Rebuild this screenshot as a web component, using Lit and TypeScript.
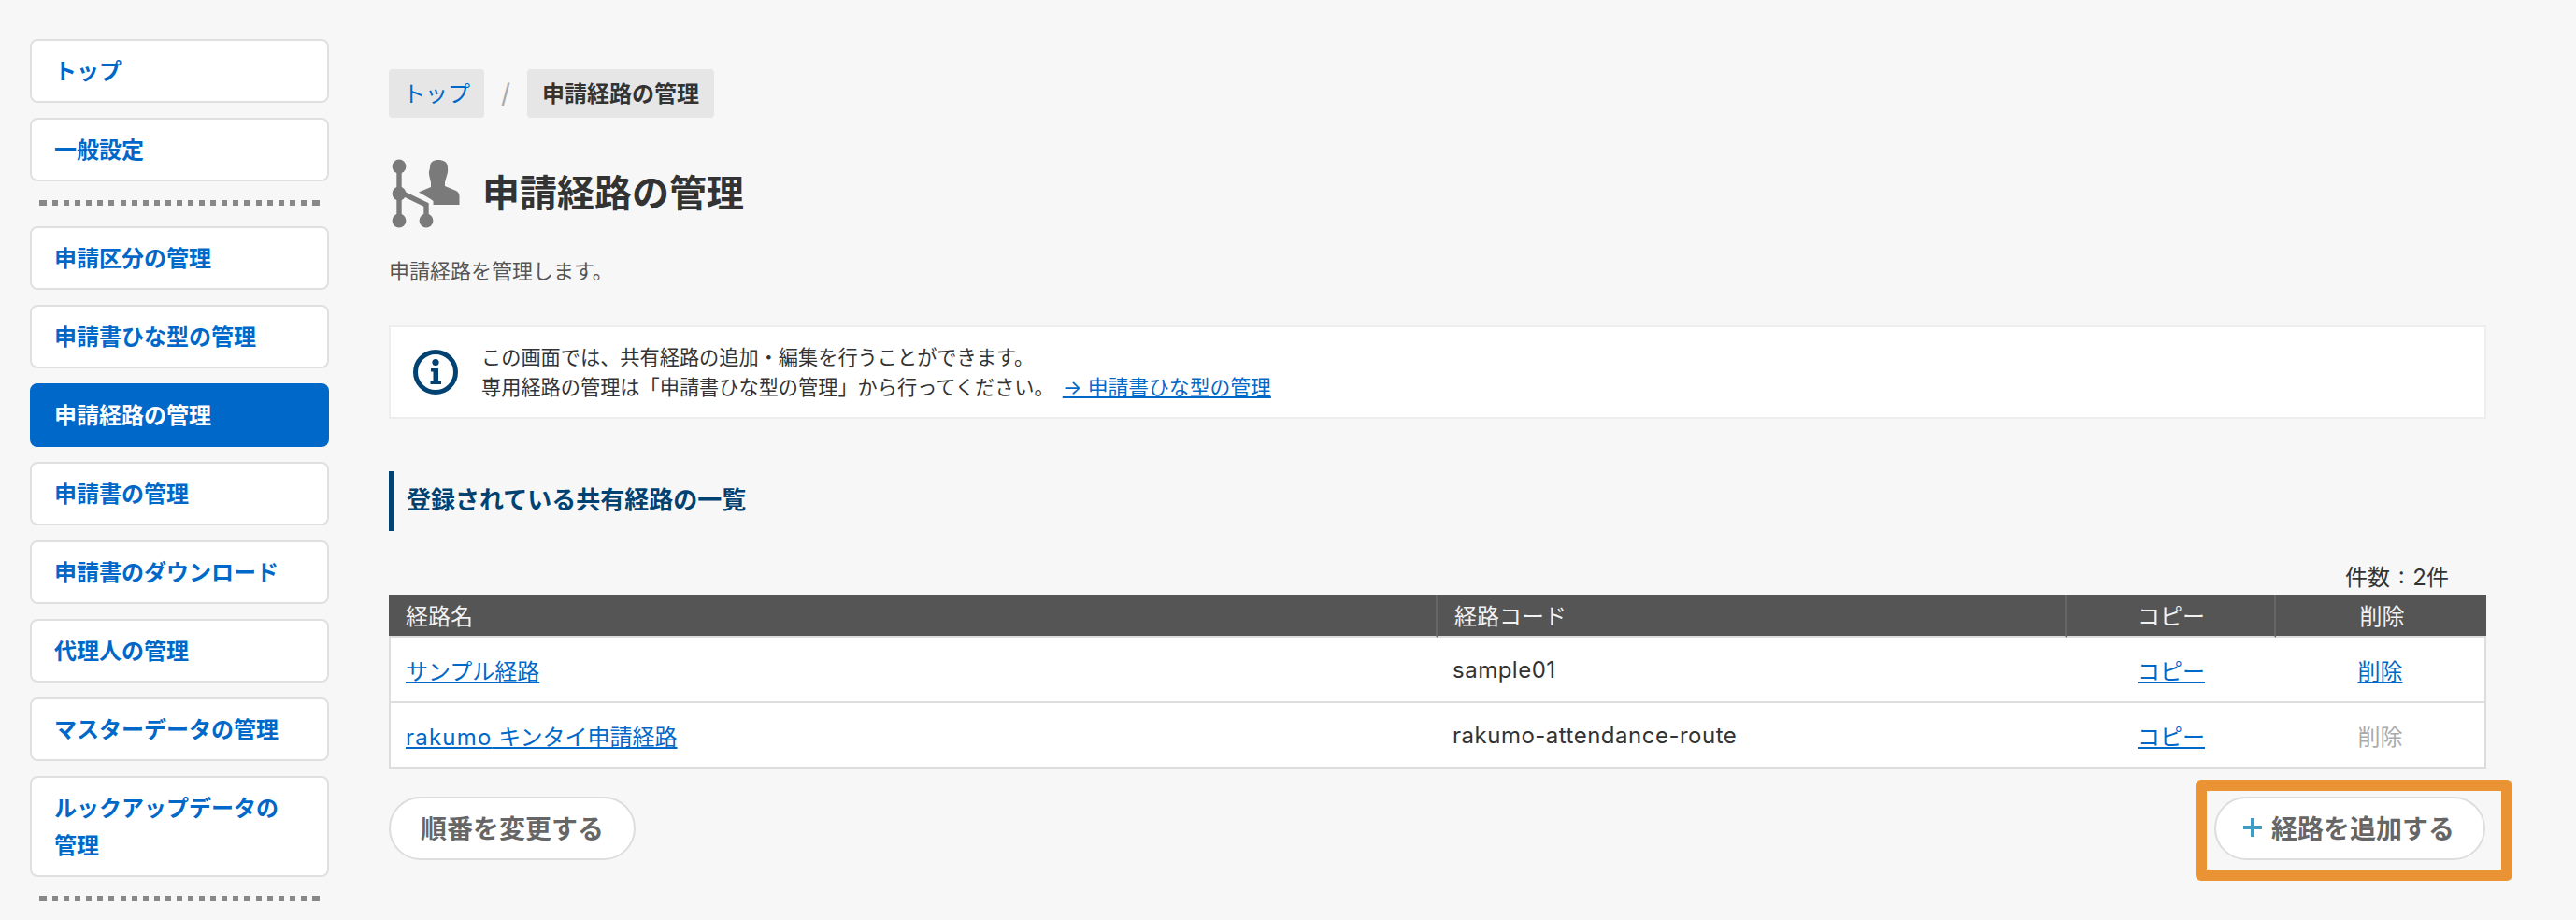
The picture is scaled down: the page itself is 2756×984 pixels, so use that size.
import { LitElement, html, css } from "lit";
import { customElement } from "lit/decorators.js";

const navA = ["トップ", "一般設定"];
const navB = ["申請区分の管理", "申請書ひな型の管理", "申請経路の管理", "申請書の管理", "申請書のダウンロード", "代理人の管理", "マスターデータの管理"];

@customElement("app-root")
export class AppRoot extends LitElement {
  static styles = css`
    :host {
      display: block;
      width: 2756px;
      height: 984px;
      overflow: hidden;
      background: #f7f7f7;
      color: #333;
      font-family: "Inter", "Noto Sans CJK JP", sans-serif;
      font-size: 24px;
    }
    * { box-sizing: border-box; }
    a { color: #0068c8; }
    .page { display: flex; align-items: flex-start; padding: 42px 0 0 32px; gap: 64px; }
    .side { width: 320px; flex: none; display: flex; flex-direction: column; gap: 16px; }
    .nav {
      display: block;
      padding: 13px 24px 11px;
      line-height: 40px;
      font-weight: 700;
      text-decoration: none;
      background: #fff;
      border: 2px solid #e0e0e0;
      border-radius: 8px;
    }
    .nav.on { background: #0068c8; border-color: #0068c8; color: #fff; }
    .dash {
      height: 6px;
      margin: 4px 10px 6px;
      background:
        linear-gradient(#888, #888) left / 8px 100% no-repeat,
        linear-gradient(#888, #888) right / 8px 100% no-repeat,
        repeating-linear-gradient(90deg, transparent 0 1.91px, #888 1.91px 7.91px, transparent 7.91px 12.087px);
    }
    .main { width: 2244px; flex: none; padding-top: 32px; }
    .crumbs { display: flex; align-items: center; }
    .crumb {
      height: 52px;
      line-height: 52px;
      padding: 1px 15px 0;
      background: #e6e6e6;
      border-radius: 4px;
    }
    a.crumb { text-decoration: none; }
    .crumb.cur { font-weight: 700; color: #333; padding: 1px 16px 0; }
    .sep { width: 46px; text-align: center; color: #aaa; font-size: 28px; }
    .title { display: flex; align-items: center; gap: 22px; margin: 44px 0 0 2px; }
    .title svg { display: block; flex: none; }
    h1 { margin: 0; font-size: 40px; line-height: 74px; font-weight: 700; color: #333; }
    .lead { margin: 28px 0 0; font-size: 22px; line-height: 36px; color: #555; }
    .info {
      display: flex;
      align-items: center;
      gap: 25px;
      margin-top: 40px;
      padding: 16px 24px;
      height: 100px;
      background: #fff;
      border: 2px solid #eee;
      font-size: 21.2px;
      line-height: 32px;
    }
    .info svg { flex: none; display: block; }
    .info a { margin-left: 9px; font-size: 21.8px; }
    h2 {
      margin: 56px 0 0;
      height: 64px;
      padding-left: 13px;
      border-left: 6px solid #004272;
      font-size: 26px;
      line-height: 61px;
      font-weight: 700;
      color: #004272;
    }
    .count { margin-top: 32px; padding-right: 40px; text-align: right; line-height: 36px; font-size: 24px; word-spacing: 2px; }
    table { width: 2244px; border-collapse: separate; border-spacing: 0; table-layout: fixed; }
    th {
      height: 46px;
      padding: 0 16px 2px 18px;
      background: #555;
      color: #f2f2f2;
      font-weight: 400;
      text-align: left;
      border-right: 2px solid #666;
      border-bottom: 2px solid #ddd;
    }
    th:last-child { border-right: 0; }
    td {
      height: 70px;
      padding: 0 16px;
      background: #fff;
      border-bottom: 2px solid #ddd;
    }
    tr td:first-child { border-left: 2px solid #ddd; }
    tr td:last-child { border-right: 2px solid #ddd; }
    .c { text-align: center; }
    .off { color: #aaa; }
    .latin { letter-spacing: 0.5px; }
    .latin.wide { letter-spacing: 1.2px; }
    .actions { display: flex; justify-content: space-between; align-items: flex-start; margin: 30px 1px 0 0; }
    .pill {
      display: flex;
      align-items: center;
      height: 68px;
      padding: 0 32px 2px;
      background: #fff;
      border: 2px solid #ddd;
      border-radius: 34px;
      font-size: 28px;
      font-weight: 700;
      color: #666;
    }
    .pill.add { padding: 0 31px 2px 29px; }
    .plus { margin-right: 10px; display: block; }
    .mark { position: relative; }
    .mark::after {
      content: "";
      position: absolute;
      inset: -18px -29px -22px -20px;
      border: 12px solid #e99335;
      border-radius: 6px;
      pointer-events: none;
    }
  `;

  nav(label: string) {
    return html`<a class="nav ${label === "申請経路の管理" ? "on" : ""}" href="#">${label}</a>`;
  }

  render() {
    return html`
      <div class="page">
        <nav class="side">
          ${navA.map((l) => this.nav(l))}
          <div class="dash"></div>
          ${navB.map((l) => this.nav(l))}
          <a class="nav" href="#">ルックアップデータの<br />管理</a>
          <div class="dash"></div>
        </nav>
        <main class="main">
          <div class="crumbs">
            <a class="crumb" href="#">トップ</a>
            <span class="sep">/</span>
            <span class="crumb cur">申請経路の管理</span>
          </div>
          <div class="title">
            <svg width="76" height="74" viewBox="18 20 76 74" fill="#7a7a7a">
              <circle cx="27" cy="28" r="7.4" />
              <circle cx="27" cy="57" r="7.4" />
              <circle cx="27" cy="86" r="7.4" />
              <circle cx="56" cy="86" r="7.4" />
              <path d="M27 28V86M29 56L56 69V86" fill="none" stroke="#7a7a7a" stroke-width="5.4" />
              <path d="M60 29C60 23 64 21 69 21C74 21 79 23 79 29C79 31 79.500 33 78.500 36C77.500 40 76.500 43 76 45V49L88 54C90 55 91.500 57 91.500 60V69H63.500V65L60 62.500L48 55.500L61 50V45C60.500 43 59.500 40 59 36C58.500 33 60 31 60 29Z" />
            </svg>
            <h1>申請経路の管理</h1>
          </div>
          <p class="lead">申請経路を管理します。</p>
          <div class="info">
            <svg width="48" height="48" viewBox="0 0 48 48">
              <circle cx="24" cy="24" r="21.500" fill="none" stroke="#004272" stroke-width="5" />
              <circle cx="24" cy="13.500" r="3.600" fill="#004272" />
              <path d="M19 20H27V33.500H30V37H18.500V33.500H21.500V23.500H19Z" fill="#004272" />
            </svg>
            <div>
              この画面では、共有経路の追加・編集を行うことができます。<br />
              専用経路の管理は「申請書ひな型の管理」から行ってください。<a href="#">→ 申請書ひな型の管理</a>
            </div>
          </div>
          <h2>登録されている共有経路の一覧</h2>
          <div class="count">件数 : 2件</div>
          <table>
            <colgroup>
              <col style="width:1122px" />
              <col style="width:673px" />
              <col style="width:224px" />
              <col style="width:225px" />
            </colgroup>
            <thead>
              <tr>
                <th>経路名</th>
                <th>経路コード</th>
                <th class="c">コピー</th>
                <th class="c">削除</th>
              </tr>
            </thead>
            <tbody>
              <tr>
                <td><a href="#">サンプル経路</a></td>
                <td class="latin">sample01</td>
                <td class="c"><a href="#">コピー</a></td>
                <td class="c"><a href="#">削除</a></td>
              </tr>
              <tr>
                <td><a href="#"><span class="latin wide">rakumo</span> キンタイ申請経路</a></td>
                <td class="latin">rakumo-attendance-route</td>
                <td class="c"><a href="#">コピー</a></td>
                <td class="c off">削除</td>
              </tr>
            </tbody>
          </table>
          <div class="actions">
            <div class="pill">順番を変更する</div>
            <div class="mark">
              <div class="pill add">
                <svg class="plus" width="20" height="20" viewBox="0 0 20 20">
                  <path d="M8 0H12V8H20V12H12V20H8V12H0V8H8Z" fill="#3f9cc2" />
                </svg>
                経路を追加する
              </div>
            </div>
          </div>
        </main>
      </div>
    `;
  }
}
